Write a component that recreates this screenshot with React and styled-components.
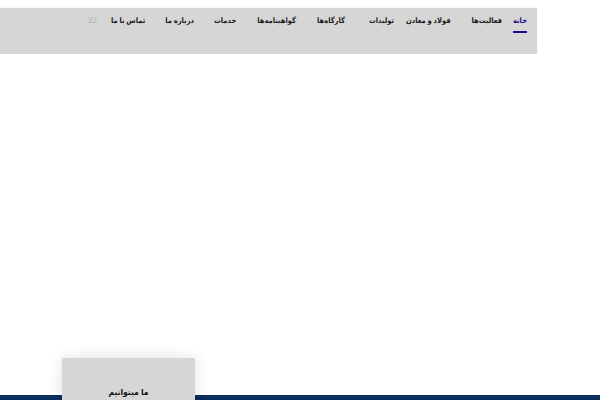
import React from 'react';
import styled, { createGlobalStyle } from 'styled-components';

const GlobalStyle = createGlobalStyle`
  html, body {
    margin: 0;
    padding: 0;
    background: #fff;
    overflow: hidden;
  }
  body {
    font-family: "DejaVu Sans Condensed", "DejaVu Sans", sans-serif;
  }
`;

const Page = styled.div`
  width: 600px;
  height: 400px;
  overflow: hidden;
  display: flex;
  flex-direction: column;
`;

const Header = styled.header`
  margin-top: 8px;
  width: 537px;
  height: 46px;
  background: #d6d6d6;
  box-shadow: 0 0 2px rgba(0, 0, 0, 0.08);
  display: flex;
  flex-direction: row-reverse;
  align-items: flex-start;
  padding: 8px 10px 0 0;
  box-sizing: border-box;
`;

const NavItem = styled.a`
  direction: rtl;
  font-size: 7.5px;
  font-weight: bold;
  word-spacing: -0.6px;
  color: ${(p) => (p.active ? '#2a0a8c' : '#1a1a1a')};
  text-decoration: none;
  margin-left: ${(p) => p.gap || 20}px;
  padding-bottom: 5px;
  border-bottom: 2px solid ${(p) => (p.active ? '#2a0a8c' : 'transparent')};
  white-space: nowrap;
  line-height: 10px;
`;

const Lang = styled.span`
  font-family: "DejaVu Sans", sans-serif;
  font-size: 7.5px;
  font-weight: 200;
  color: #8a8a8a;
  line-height: 10px;
  letter-spacing: -0.3px;
`;

const Hero = styled.section`
  flex: 1;
  background: #fff;
`;

const Band = styled.div`
  height: 5px;
  background: #0d2f5e;
  position: relative;
`;

const Card = styled.div`
  position: absolute;
  left: 62px;
  bottom: -40px;
  width: 133px;
  height: 82px;
  background: #d6d6d6;
  box-shadow: 0 0 14px rgba(0, 0, 0, 0.12);
  display: flex;
  justify-content: center;
  padding-top: 29px;
  box-sizing: border-box;
`;

const CardTitle = styled.span`
  direction: rtl;
  font-size: 8.5px;
  font-weight: bold;
  word-spacing: -0.5px;
  color: #111;
  line-height: 10px;
`;

const items = [
  { label: 'خانه', active: true, gap: 11 },
  { label: 'فعالیت‌ها', gap: 21 },
  { label: 'فولاد و معادن', gap: 12 },
  { label: 'تولیدات', gap: 24 },
  { label: 'گارگاه‌ها', gap: 21 },
  { label: 'گواهینامه‌ها', gap: 21 },
  { label: 'خدمات', gap: 20 },
  { label: 'درباره ما', gap: 20 },
  { label: 'تماس با ما', gap: 14 },
];

export default function App() {
  return (
    <Page>
      <GlobalStyle />
      <Header>
        {items.map((it) => (
          <NavItem key={it.label} href="#" active={it.active ? 1 : 0} gap={it.gap}>
            {it.label}
          </NavItem>
        ))}
        <Lang>22</Lang>
      </Header>
      <Hero />
      <Band>
        <Card>
          <CardTitle>ما میتوانیم</CardTitle>
        </Card>
      </Band>
    </Page>
  );
}
